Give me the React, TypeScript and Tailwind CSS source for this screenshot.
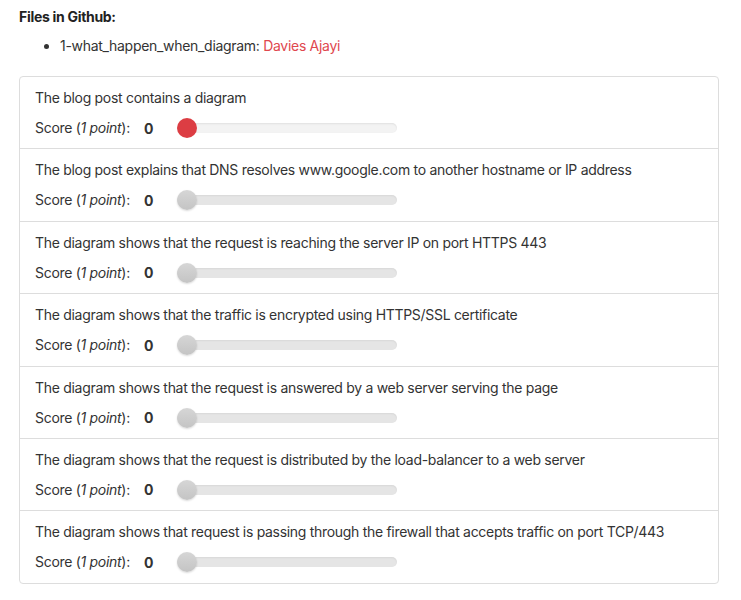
import React from "react";

const items = [
  "The blog post contains a diagram",
  "The blog post explains that DNS resolves www.google.com to another hostname or IP address",
  "The diagram shows that the request is reaching the server IP on port HTTPS 443",
  "The diagram shows that the traffic is encrypted using HTTPS/SSL certificate",
  "The diagram shows that the request is answered by a web server serving the page",
  "The diagram shows that the request is distributed by the load-balancer to a web server",
  "The diagram shows that request is passing through the firewall that accepts traffic on port TCP/443",
];

function Slider({ active }: { active: boolean }) {
  return (
    <div className="relative h-5 w-[220px] flex items-center">
      <div
        className={
          "h-[10px] w-full rounded-full " +
          (active ? "bg-[#f3f3f3] shadow-[inset_0_1px_2px_rgba(0,0,0,0.08)]" : "bg-[#e5e5e5] shadow-[inset_0_1px_2px_rgba(0,0,0,0.06)]")
        }
      />
      <div
        className={
          "absolute left-0 top-0 h-5 w-5 rounded-full " +
          (active
            ? "bg-[#dc3d43]"
            : "bg-gradient-to-b from-[#d6d6d6] to-[#c4c4c4] shadow-[0_1px_2px_rgba(0,0,0,0.15)]")
        }
      />
    </div>
  );
}

export default function App() {
  return (
    <div
      className="bg-white text-[#333] text-[14px] tracking-[-0.3px] px-[19px] pt-[7px] pb-4 w-[741px]"
      style={{ fontFamily: "Inter, 'Noto Sans', sans-serif" }}
    >
      <div className="font-bold leading-5 text-[#222]">Files in Github:</div>
      <ul className="mt-[9px] pl-[41px] list-disc leading-5">
        <li>
          1-what_happen_when_diagram: <span className="text-[#e0474e]">Davies Ajayi</span>
        </li>
      </ul>
      <div className="mt-[20px] border border-[#dddddd] rounded-[4px] w-[700px]">
        {items.map((t, i) => (
          <div
            key={i}
            className={"px-[15px] pt-[11px] pb-[10.4px] " + (i > 0 ? "border-t border-[#dddddd]" : "")}
          >
            <div className="leading-5">{t}</div>
            <div className="mt-[10px] flex items-center h-5">
              <div className="w-[109px] leading-5">
                Score (<span className="italic">1 point</span>):
              </div>
              <div className="w-[33px] font-bold">0</div>
              <Slider active={i === 0} />
            </div>
          </div>
        ))}
      </div>
    </div>
  );
}
